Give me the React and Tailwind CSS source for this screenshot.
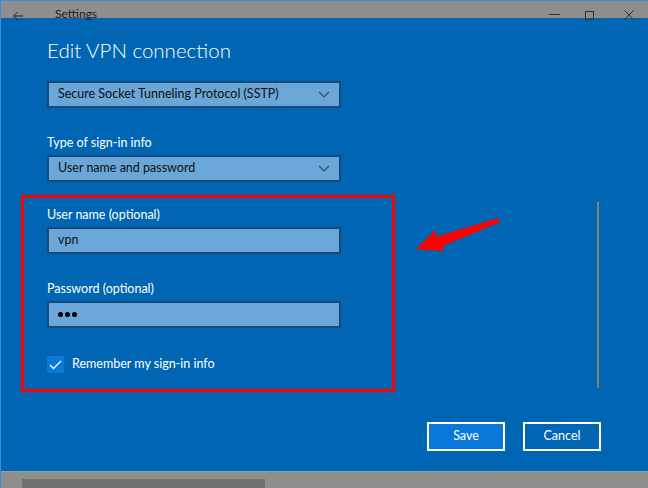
const FONT = { fontFamily: 'Lato, "Noto Sans", sans-serif' };

function Chevron() {
  return (
    <svg width="12" height="7" viewBox="0 0 12 7" fill="none">
      <path d="M1 1l5 5 5-5" stroke="#2d4d6e" strokeWidth="1.2" />
    </svg>
  );
}

function Select({ value }) {
  return (
    <div className="w-[294px] h-[27px] border-2 border-[#164a7c] bg-[#6aa6d7] flex items-center justify-between pl-[9px] pr-[9px]">
      <span className="text-[12.5px] text-[#111] leading-none">{value}</span>
      <Chevron />
    </div>
  );
}

function Field({ label, children }) {
  return (
    <div className="flex flex-col">
      <div className="text-[12.5px] leading-[18px] text-white">{label}</div>
      <div className="mt-[3px] w-[294px] h-[27px] border-2 border-[#164a7c] bg-[#6aa6d7] flex items-center pl-[9px]">
        {children}
      </div>
    </div>
  );
}

export default function App() {
  return (
    <div
      className="relative w-[648px] h-[488px] overflow-hidden bg-[#0066b3] flex flex-col border-t border-l border-[#3a8fd8]"
      style={FONT}
    >
      {/* title bar */}
      <div className="h-[17px] bg-[#8e8e8e] flex items-end text-[#1b1b1b] overflow-visible relative z-10">
        <svg className="ml-[11px] mb-[-3px]" width="12" height="10" viewBox="0 0 12 10" fill="none">
          <path d="M11 5H1.5M5.5 1L1.5 5l4 4" stroke="#222" strokeWidth="1" />
        </svg>
        <span className="ml-[31px] text-[12px] leading-none mb-[-2px]">Settings</span>
        <div className="ml-auto flex items-end mb-[-2px]">
          <div className="w-[11px] h-px bg-[#333] mb-[5px] mr-[25px]" />
          <div className="w-[9px] h-[9px] border border-[#333] mr-[30px]" />
          <svg className="mr-[14px]" width="10" height="10" viewBox="0 0 10 10">
            <path d="M0.5 0.5l9 9M9.5 0.5l-9 9" stroke="#333" strokeWidth="1" />
          </svg>
        </div>
      </div>

      {/* body */}
      <div className="flex-1 flex flex-col">
        <div className="flex">
          <div className="flex-1 flex flex-col pl-[20px]">
            <h1 className="ml-[26px] mt-[19px] text-[20.5px] leading-[27px] font-light text-white">
              Edit VPN connection
            </h1>
            <div className="ml-[26px] mt-[17px]">
              <Select value="Secure Socket Tunneling Protocol (SSTP)" />
            </div>
            <div className="ml-[26px] mt-[26px] text-[12.5px] leading-[18px] text-white">Type of sign-in info</div>
            <div className="ml-[26px] mt-[3px]">
              <Select value="User name and password" />
            </div>

            <div className="mt-[13px] w-[374px] h-[197px] border-[3px] border-[#ff0000] pl-[23px] pt-[8px] flex flex-col">
              <Field label="User name (optional)">
                <span className="text-[12.5px] text-[#111] leading-none">vpn</span>
              </Field>
              <div className="mt-[26px]">
                <Field label="Password (optional)">
                  <span className="flex gap-[2px]">
                    <span className="w-[5px] h-[5px] rounded-full bg-black" />
                    <span className="w-[5px] h-[5px] rounded-full bg-black" />
                    <span className="w-[5px] h-[5px] rounded-full bg-black" />
                  </span>
                </Field>
              </div>
              <div className="mt-[28px] flex items-center">
                <div className="w-[17px] h-[17px] bg-[#0a7ad8] flex items-center justify-center">
                  <svg width="13" height="10" viewBox="0 0 13 10" fill="none">
                    <path d="M1 5l3.5 3.5L12 1" stroke="white" strokeWidth="1.3" />
                  </svg>
                </div>
                <span className="ml-[8px] text-[12.5px] text-white leading-none">Remember my sign-in info</span>
              </div>
            </div>
          </div>
          {/* vertical scrollbar */}
          <div className="w-[2px] mr-[49px] mt-[184px] h-[186px] bg-[#8a7f78]" />
        </div>

        <div className="mt-[30px] flex justify-end pr-[47px] gap-[18px]">
          <button className="w-[78px] h-[29px] border-2 border-white bg-[#0a78d6] text-white text-[12.5px]">
            Save
          </button>
          <button className="w-[78px] h-[29px] border-2 border-white bg-[#0066b3] text-white text-[12.5px]">
            Cancel
          </button>
        </div>
      </div>

      {/* bottom scrollbar strip */}
      <div className="h-[17px] bg-[#8e8e8e] border-t border-[#9a9a9a] flex items-end">
        <div className="ml-[21px] w-[243px] h-[9px] bg-[#707070]" />
      </div>

      {/* annotation arrow */}
      <svg className="absolute left-[410px] top-[210px]" width="92" height="44" viewBox="0 0 92 44">
        <path d="M5 38L25 18L24 26L87 7L89 11L32 35L33 40Z" fill="#ff0000" />
      </svg>
    </div>
  );
}
